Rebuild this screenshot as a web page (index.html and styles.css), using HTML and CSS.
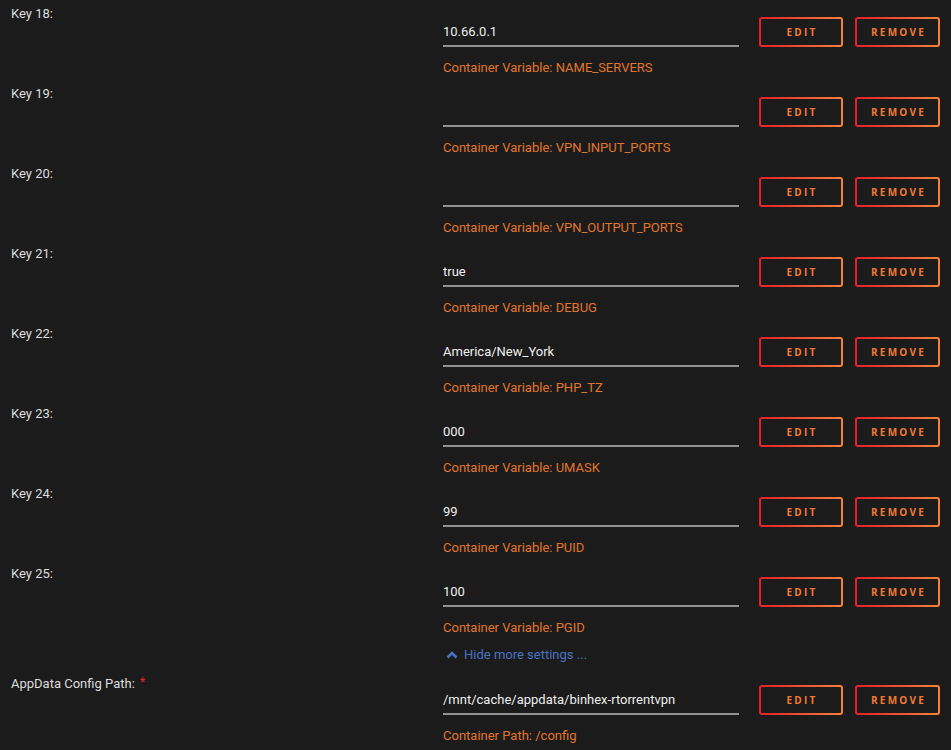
FILE: index.html
```html
<!DOCTYPE html>
<html lang="en">
<head>
<meta charset="utf-8">
<title>Template settings</title>
<link rel="stylesheet" href="styles.css">
</head>
<body>
<div class="form">
  <div class="row">
    <div class="label">Key 18:</div>
    <div class="field">
      <div class="input-row"><input class="input" type="text" value="10.66.0.1"><button class="btn">Edit</button><button class="btn wide">Remove</button></div>
      <div class="help">Container Variable: NAME_SERVERS</div>
    </div>
  </div>
  <div class="row">
    <div class="label">Key 19:</div>
    <div class="field">
      <div class="input-row"><input class="input" type="text" value=""><button class="btn">Edit</button><button class="btn wide">Remove</button></div>
      <div class="help">Container Variable: VPN_INPUT_PORTS</div>
    </div>
  </div>
  <div class="row">
    <div class="label">Key 20:</div>
    <div class="field">
      <div class="input-row"><input class="input" type="text" value=""><button class="btn">Edit</button><button class="btn wide">Remove</button></div>
      <div class="help">Container Variable: VPN_OUTPUT_PORTS</div>
    </div>
  </div>
  <div class="row">
    <div class="label">Key 21:</div>
    <div class="field">
      <div class="input-row"><input class="input" type="text" value="true"><button class="btn">Edit</button><button class="btn wide">Remove</button></div>
      <div class="help">Container Variable: DEBUG</div>
    </div>
  </div>
  <div class="row">
    <div class="label">Key 22:</div>
    <div class="field">
      <div class="input-row"><input class="input" type="text" value="America/New_York"><button class="btn">Edit</button><button class="btn wide">Remove</button></div>
      <div class="help">Container Variable: PHP_TZ</div>
    </div>
  </div>
  <div class="row">
    <div class="label">Key 23:</div>
    <div class="field">
      <div class="input-row"><input class="input" type="text" value="000"><button class="btn">Edit</button><button class="btn wide">Remove</button></div>
      <div class="help">Container Variable: UMASK</div>
    </div>
  </div>
  <div class="row">
    <div class="label">Key 24:</div>
    <div class="field">
      <div class="input-row"><input class="input" type="text" value="99"><button class="btn">Edit</button><button class="btn wide">Remove</button></div>
      <div class="help">Container Variable: PUID</div>
    </div>
  </div>
  <div class="row">
    <div class="label">Key 25:</div>
    <div class="field">
      <div class="input-row"><input class="input" type="text" value="100"><button class="btn">Edit</button><button class="btn wide">Remove</button></div>
      <div class="help">Container Variable: PGID</div>
    </div>
  </div>
  <div class="toggle-row">
    <a class="toggle" href="#"><svg class="chev" width="12" height="8" viewBox="0 0 12 8"><polyline points="1.5,6.5 6,2 10.5,6.5" fill="none" stroke="currentColor" stroke-width="2.6"/></svg>Hide more settings ...</a>
  </div>
  <div class="row">
    <div class="label">AppData Config Path: <span class="req">*</span></div>
    <div class="field">
      <div class="input-row"><input class="input" type="text" value="/mnt/cache/appdata/binhex-rtorrentvpn"><button class="btn">Edit</button><button class="btn wide">Remove</button></div>
      <div class="help">Container Path: /config</div>
    </div>
  </div>
</div>
</body>
</html>
```

FILE: styles.css
```css
html, body {
  margin: 0;
  padding: 0;
  background: #1c1b1b;
  font-family: Roboto, "Open Sans", sans-serif;
  font-size: 13px;
  color: #e4e4e4;
}

.form {
  display: flex;
  flex-direction: column;
}

.row {
  display: grid;
  grid-template-columns: 443px 1fr;
  height: 80px;
}

.label {
  padding: 6px 0 0 11px;
  line-height: 16px;
  color: #dcdcdc;
}

.req {
  color: #e0252b;
  font-size: 12px;
  margin-left: 2px;
  vertical-align: 2px;
}

.field {
  display: flex;
  flex-direction: column;
}

.input-row {
  display: flex;
  align-items: center;
  margin-top: 17px;
  height: 30px;
}

.input {
  box-sizing: border-box;
  width: 296px;
  height: 30px;
  margin: 0 20px 0 0;
  padding: 0;
  border: none;
  border-bottom: 2px solid #939393;
  background: transparent;
  color: #eeeeee;
  font-family: Roboto, "Open Sans", sans-serif;
  font-size: 13px;
  outline: none;
}

.btn {
  box-sizing: border-box;
  width: 84px;
  height: 30px;
  margin: 0 12px 0 0;
  padding: 0 0 0 2px;
  border: 2px solid transparent;
  border-radius: 3px;
  background: linear-gradient(#1c1b1b, #1c1b1b) padding-box,
              linear-gradient(90deg, #e41f2b 0%, #f9823a 100%) border-box;
  color: #f07a32;
  font-family: "Open Sans", "Noto Sans", sans-serif;
  font-weight: 700;
  font-size: 10px;
  letter-spacing: 2.2px;
  text-transform: uppercase;
}

.btn.wide {
  width: 85px;
}

.help {
  margin-top: 13px;
  line-height: 16px;
  color: #e0762c;
}

.toggle-row {
  padding: 7px 0 5px 443px;
  height: 16px;
  line-height: 16px;
}

.toggle {
  display: inline-flex;
  align-items: center;
  color: #4a72c4;
  text-decoration: none;
}

.chev {
  margin: 0 6px 0 3px;
}
```
